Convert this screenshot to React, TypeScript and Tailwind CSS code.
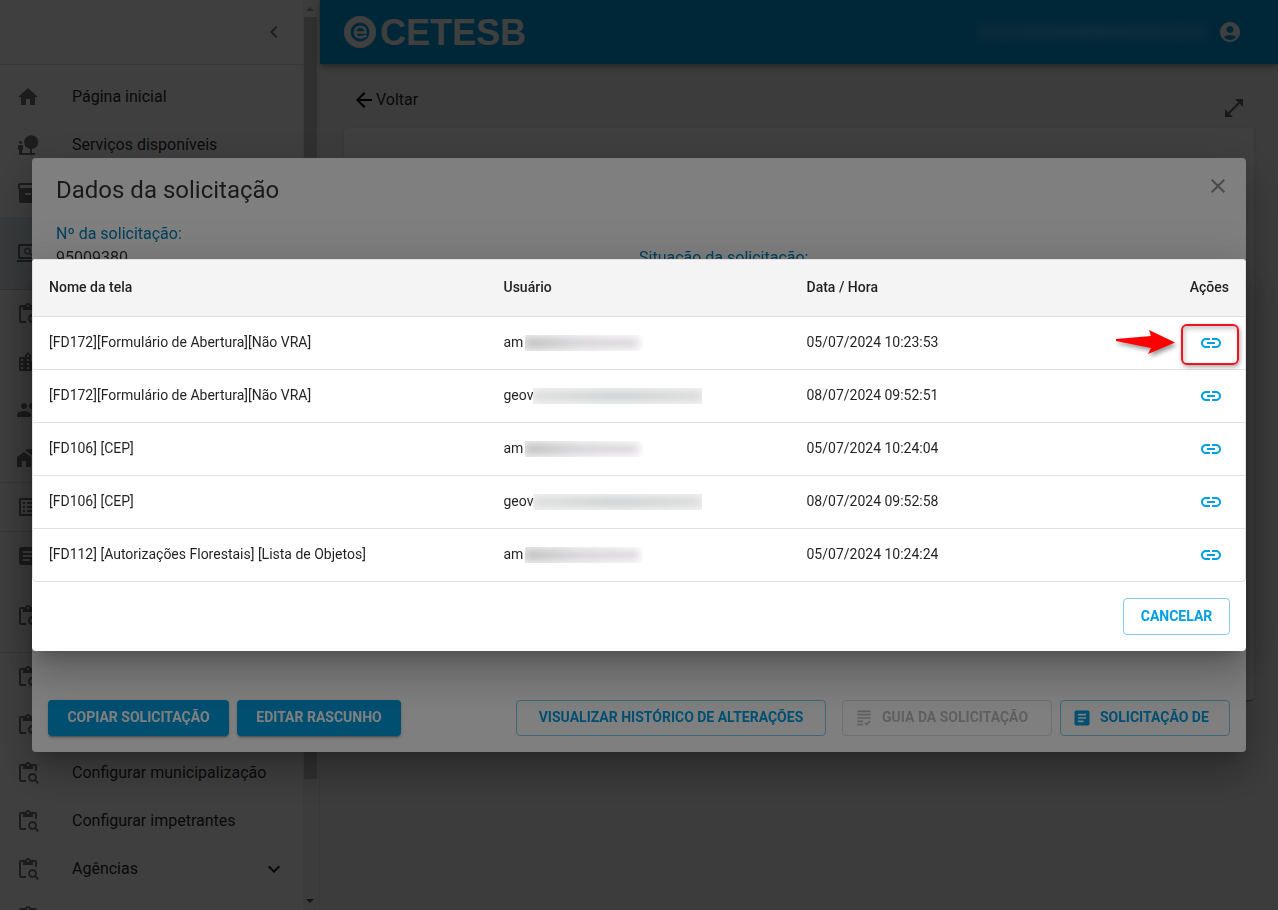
import {
  MdAccountCircle,
  MdArrowBack,
  MdArticle,
  MdChevronLeft,
  MdClose,
  MdContentPasteSearch,
  MdExpandMore,
  MdGrading,
  MdHome,
  MdInventory2,
  MdLink,
  MdListAlt,
  MdLocationCity,
  MdMapsHomeWork,
  MdNaturePeople,
  MdOpenInFull,
  MdOutlineScreenSearchDesktop,
  MdPeople,
} from "react-icons/md";

const menuItems: any[] = [
  { icon: MdHome, label: "Página inicial" },
  { icon: MdNaturePeople, label: "Serviços disponíveis" },
  { icon: MdInventory2 },
  { icon: MdOutlineScreenSearchDesktop, tall: true, active: true, divider: true },
  { icon: MdContentPasteSearch },
  { icon: MdLocationCity },
  { icon: MdPeople },
  { icon: MdMapsHomeWork, divider: true },
  { icon: MdListAlt, divider: true },
  { icon: MdArticle },
  { icon: MdContentPasteSearch, tall: true, divider: true },
  { icon: MdContentPasteSearch },
  { icon: MdContentPasteSearch },
  { icon: MdContentPasteSearch, label: "Configurar municipalização" },
  { icon: MdContentPasteSearch, label: "Configurar impetrantes" },
  { icon: MdContentPasteSearch, label: "Agências", expandable: true },
  { icon: MdContentPasteSearch },
];

const rows = [
  { screen: "[FD172][Formulário de Abertura][Não VRA]", user: "am", date: "05/07/2024 10:23:53" },
  { screen: "[FD172][Formulário de Abertura][Não VRA]", user: "geov", date: "08/07/2024 09:52:51" },
  { screen: "[FD106] [CEP]", user: "am", date: "05/07/2024 10:24:04" },
  { screen: "[FD106] [CEP]", user: "geov", date: "08/07/2024 09:52:58" },
  { screen: "[FD112] [Autorizações Florestais] [Lista de Objetos]", user: "am", date: "05/07/2024 10:24:24" },
];

const dialogShadow =
  "shadow-[0px_11px_15px_-7px_rgba(0,0,0,0.2),0px_24px_38px_3px_rgba(0,0,0,0.14),0px_9px_46px_8px_rgba(0,0,0,0.12)]";
const containedButton =
  "h-9 rounded bg-[#009fe3] px-2 pb-0.5 text-sm font-bold text-white uppercase shadow-[0px_3px_1px_-2px_rgba(0,0,0,0.2),0px_2px_2px_0px_rgba(0,0,0,0.14),0px_1px_5px_0px_rgba(0,0,0,0.12)]";
const outlinedButton =
  "flex items-center rounded border border-[#009fe3]/50 text-sm font-bold text-[#009fe3] uppercase";

const Sidebar = () => {
  return (
    <aside className="flex w-80 shrink-0 border-r border-black/10 bg-white">
      <div className="flex min-w-0 flex-1 flex-col overflow-hidden">
        <div className="flex h-[65px] shrink-0 items-center justify-end border-b border-black/12 pr-[17px]">
          <button type="button" aria-label="Recolher menu" className="text-black/55">
            <MdChevronLeft size={24} />
          </button>
        </div>
        <nav className="pt-2">
          {menuItems.map((item: any, index: number) => (
            <a
              key={index}
              href="#"
              className={`flex items-center pr-[17px] pl-4 ${item.tall ? "h-[72px]" : "h-12"} ${
                item.active ? "bg-[#e0eaf1]" : ""
              } ${item.divider ? "box-content border-b border-black/12" : ""}`}
            >
              <span className="w-14 shrink-0 text-black/55">
                <item.icon size={24} />
              </span>
              <span className="flex-1 pb-px text-base text-black/87">{item.label}</span>
              {item.expandable && <MdExpandMore size={24} className="text-black/87" />}
            </a>
          ))}
        </nav>
      </div>
      <div className="flex w-4 shrink-0 flex-col bg-[#f1f1f1] py-1.5 pl-px">
        <svg width="8" height="6" viewBox="0 0 8 6" className="ml-0.5 fill-[#a3a3a3]">
          <path d="M4 1l4 4H0z" />
        </svg>
        <div className="mt-[5px] h-[762px] w-[13px] shrink-0 bg-[#c1c1c1]" />
        <svg width="8" height="6" viewBox="0 0 8 6" className="mt-auto ml-0.5 fill-[#505050]">
          <path d="M0 1h8L4 5z" />
        </svg>
      </div>
    </aside>
  );
};

const Logo = () => {
  return (
    <div className="flex items-center gap-1 text-white">
      <svg width="32" height="32" viewBox="0 0 32 32" fill="none">
        <circle cx="16" cy="16" r="12.7" stroke="currentColor" strokeWidth="6.6" />
        <path
          d="M11 16.5H21.6C21.6 12.9 19.7 10.8 16.5 10.8 13.2 10.8 11 13 11 16.2 11 19.4 13.2 21.4 16.6 21.4 18.9 21.4 20.7 20.7 22.2 19.3"
          stroke="currentColor"
          strokeWidth="2.6"
        />
      </svg>
      <span className="pt-0.5 font-['Liberation_Sans',Arial,sans-serif] text-4xl font-bold">CETESB</span>
    </div>
  );
};

const Header = () => {
  return (
    <header className="flex h-16 shrink-0 items-center justify-between bg-[#009fe3] px-6 shadow-[0px_2px_4px_-1px_rgba(0,0,0,0.2),0px_4px_5px_0px_rgba(0,0,0,0.14),0px_1px_10px_0px_rgba(0,0,0,0.12)]">
      <Logo />
      <div className="flex items-center gap-3 pr-3">
        <span className="h-4 w-[228px] rounded bg-linear-to-r from-white/15 via-white/20 to-white/15 blur-xs" />
        <button type="button" aria-label="Conta" className="text-white">
          <MdAccountCircle size={24} />
        </button>
      </div>
    </header>
  );
};

const RequestDialog = () => {
  return (
    <div className="fixed inset-0 flex items-center bg-black/50 p-8">
      <section className={`flex h-[594px] w-full flex-col rounded bg-white ${dialogShadow}`}>
        <div className="flex items-start justify-between py-4 pr-4 pl-6">
          <h2 className="text-2xl text-black/80">Dados da solicitação</h2>
          <button type="button" aria-label="Fechar" className="text-black/42">
            <MdClose size={24} />
          </button>
        </div>
        <div className="grid flex-1 grid-cols-2 px-6 text-base">
          <div className="h-12 self-start">
            <p className="text-[#0080b7]">Nº da solicitação:</p>
            <p className="text-black/80">95009380</p>
          </div>
          <div className="flex h-12 items-end self-start">
            <p className="text-[#0080b7]">Situação da solicitação:</p>
          </div>
        </div>
        <div className="flex items-center justify-between p-4">
          <div className="flex gap-2">
            <button type="button" className={`${containedButton} min-w-[181px]`}>
              Copiar solicitação
            </button>
            <button type="button" className={`${containedButton} min-w-[164px]`}>
              Editar rascunho
            </button>
          </div>
          <div className="flex gap-2">
            <button
              type="button"
              className={`${outlinedButton} mr-2 h-9 min-w-[310px] justify-center px-2 pb-0.5`}
            >
              Visualizar histórico de alterações
            </button>
            <button
              type="button"
              disabled
              className="flex h-9 min-w-[210px] items-center gap-2 rounded border border-black/12 pr-2 pl-[11px] text-sm font-bold text-black/26 uppercase"
            >
              <MdGrading size={20} />
              <span className="pb-0.5">Guia da solicitação</span>
            </button>
            <button type="button" className={`${outlinedButton} h-9 min-w-[170px] gap-2 pr-2 pl-[11px]`}>
              <MdArticle size={20} />
              <span className="pb-0.5">Solicitação de</span>
            </button>
          </div>
        </div>
      </section>
    </div>
  );
};

const HiddenAddress = ({ wide }: { wide: boolean }) => {
  return (
    <span
      className={`inline-block h-4 overflow-hidden align-middle ${
        wide ? "w-[169px] bg-[#f2f2f2]" : "ml-0.5 w-[118px] bg-linear-to-r from-[#ededed] via-[#f5f5f5] to-white"
      }`}
    >
      <span
        className={`mt-1 block h-2 blur-xs ${
          wide
            ? "bg-linear-to-r from-[#d8d8d8] via-[#c2c8c8] to-[#d4d6d4]"
            : "mr-1 bg-linear-to-r from-[#b0b0b0] via-[#cfccd0] to-[#d2ced2]"
        }`}
      />
    </span>
  );
};

const Callout = () => {
  return (
    <div className="pointer-events-none absolute top-[7px] right-1.5 flex items-center gap-1">
      <svg width="62" height="36" viewBox="0 0 62 36" className="drop-shadow-[2px_3px_2px_rgba(0,0,0,0.4)]">
        <path d="M1 13L36 10 34 4 60 16.5 33 28 36 22 1 15Z" fill="#ff0000" />
      </svg>
      <div className="h-[41px] w-[58px] rounded-md border-2 border-[#f0141e] shadow-[1px_2px_4px_rgba(0,0,0,0.35),inset_2px_3px_5px_rgba(0,0,0,0.2)]" />
    </div>
  );
};

const HistoryDialog = () => {
  return (
    <div className="fixed inset-0 flex items-center bg-black/50 p-8">
      <section className={`w-full rounded bg-white ${dialogShadow}`}>
        <div className="overflow-hidden rounded border border-[#e0e0e0]">
          <table className="w-full table-fixed text-left text-sm text-black/87">
            <thead>
              <tr className="h-14 border-b border-[#e0e0e0] bg-[#f4f4f4]">
                <th className="w-[37.5%] px-4 pb-0.5 font-medium">Nome da tela</th>
                <th className="w-1/4 px-4 pb-0.5 font-medium">Usuário</th>
                <th className="w-1/4 px-4 pb-0.5 font-medium">Data / Hora</th>
                <th className="px-4 pb-0.5 text-right font-medium">Ações</th>
              </tr>
            </thead>
            <tbody>
              {rows.map((row: any, index: number) => (
                <tr key={index} className="h-[53px] border-b border-[#e0e0e0] last:border-0">
                  <td className="px-4 pb-0.5">{row.screen}</td>
                  <td className="px-4 pb-0.5 whitespace-nowrap">
                    {row.user}
                    <HiddenAddress wide={row.user === "geov"} />
                  </td>
                  <td className="px-4 pb-0.5">{row.date}</td>
                  <td className="relative px-4">
                    <button
                      type="button"
                      aria-label="Abrir link"
                      className="ml-auto flex size-9 items-center justify-center text-[#009fe3]"
                    >
                      <MdLink size={24} />
                    </button>
                    {index === 0 && <Callout />}
                  </td>
                </tr>
              ))}
            </tbody>
          </table>
        </div>
        <div className="flex justify-end p-4">
          <button
            type="button"
            className={`${outlinedButton} h-[37px] min-w-[107px] justify-center px-2 pb-0.5`}
          >
            Cancelar
          </button>
        </div>
      </section>
    </div>
  );
};

const App = () => {
  return (
    <div className="flex h-screen overflow-hidden bg-[#f0f0f0] font-[Roboto,sans-serif]">
      <Sidebar />
      <div className="flex min-w-0 flex-1 flex-col">
        <Header />
        <main className="px-6 pt-6">
          <div className="flex h-10 items-start justify-between px-2">
            <a href="#" className="flex items-center text-base text-black/87">
              <MdArrowBack size={24} className="text-black" />
              Voltar
            </a>
            <button type="button" aria-label="Expandir" className="mt-2 text-black/60">
              <MdOpenInFull size={24} />
            </button>
          </div>
          <div className="h-[572px] rounded bg-white shadow-[0px_2px_1px_-1px_rgba(0,0,0,0.2),0px_1px_1px_0px_rgba(0,0,0,0.14),0px_1px_3px_0px_rgba(0,0,0,0.12)]" />
        </main>
      </div>
      <RequestDialog />
      <HistoryDialog />
    </div>
  );
};

export default App;
